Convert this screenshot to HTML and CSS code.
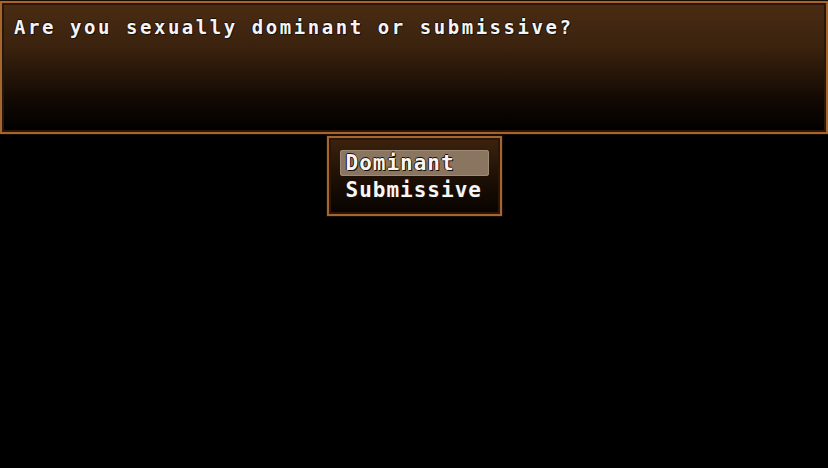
FILE: index.html
```html
<!DOCTYPE html>
<html lang="en">

<head>
    <meta charset="UTF-8">
    <meta name="viewport" content="width=device-width, initial-scale=1.0">
    <title>Dialogue</title>
    <link rel="stylesheet" href="styles.css">
</head>

<body>
    <div class="screen">
        <!-- Message window -->
        <div class="window message">
            <p class="message-text">Are you sexually dominant or submissive?</p>
        </div>

        <!-- Choice list -->
        <div class="window choices">
            <div class="choice selected">Dominant</div>
            <div class="choice">Submissive</div>
        </div>
    </div>
</body>

</html>
```
FILE: styles.css
```css
body {
    margin: 0;
    padding: 0;
    background-color: #000;
    font-family: 'DejaVu Sans Mono', 'Liberation Mono', monospace;
}

.screen {
    width: 828px;
    height: 468px;
    display: flex;
    flex-direction: column;
    align-items: center;
    overflow: hidden;
}

.window {
    box-sizing: border-box;
    border: 2px solid #a4662c;
    box-shadow: inset 0 0 0 2px #2a1608, 0 0 0 1px #1a0d04;
}

.message {
    width: 828px;
    height: 133px;
    margin-top: 1px;
    background: linear-gradient(to bottom, #4a2c13 0%, #3a220e 35%, #120903 75%, #000 100%);
    padding: 12px 12px;
}

.message-text {
    margin: 0;
    color: #f4f4f4;
    font-size: 19px;
    font-weight: bold;
    letter-spacing: 2.55px;
    line-height: 24px;
    text-shadow: 1px 1px 0 #1a1008, -1px 0 0 #1a1008, 0 -1px 0 #1a1008;
}

.choices {
    width: 175px;
    height: 80px;
    margin-top: 2px;
    background: linear-gradient(to bottom, #3c230e 0%, #1c0f05 55%, #070301 100%);
    padding: 12px 11px;
    display: flex;
    flex-direction: column;
    gap: 1px;
}

.choice {
    color: #f6f6f6;
    font-size: 21px;
    font-weight: bold;
    letter-spacing: 1px;
    line-height: 26px;
    height: 26px;
    padding-left: 6px;
    text-shadow: 1px 1px 0 #1a1008, -1px 0 0 #1a1008, 0 -1px 0 #1a1008;
}

.selected {
    background-color: #8a7561;
    border-radius: 3px;
    box-shadow: inset 0 0 0 1px #a08b76;
}
```
